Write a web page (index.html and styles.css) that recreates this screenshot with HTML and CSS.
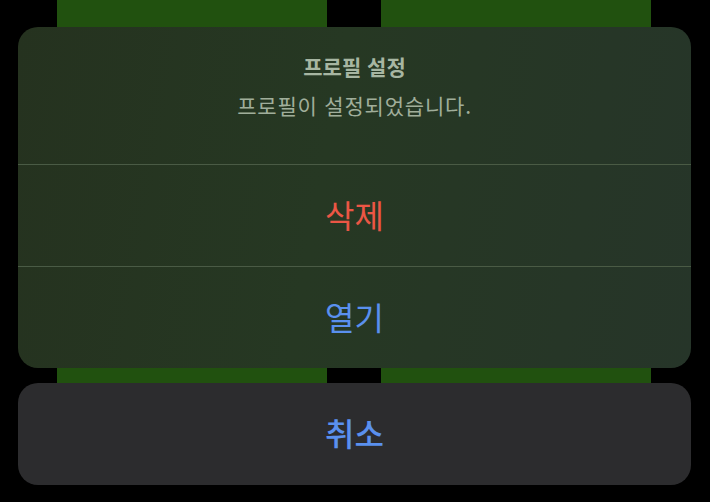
FILE: index.html
```html
<!DOCTYPE html>
<html lang="ko">
<head>
<meta charset="utf-8">
<link rel="stylesheet" href="styles.css">
</head>
<body>
<div class="backdrop">
  <div class="tile"></div>
  <div class="tile"></div>
</div>
<div class="sheet">
  <div class="group">
    <div class="header">
      <div class="title">프로필 설정</div>
      <div class="message">프로필이 설정되었습니다.</div>
    </div>
    <div class="action destructive">삭제</div>
    <div class="action">열기</div>
  </div>
  <div class="cancel">취소</div>
</div>
</body>
</html>
```
FILE: styles.css
```css
html, body {
  margin: 0;
  background: #000;
  width: 710px;
  height: 502px;
  overflow: hidden;
  font-family: "Noto Sans CJK KR", "Noto Sans", sans-serif;
}
body { position: relative; }
.backdrop {
  display: flex;
  gap: 54px;
  padding-left: 57px;
}
.tile {
  width: 270px;
  height: 420px;
  background: #21510f;
}
.sheet {
  position: absolute;
  top: 27px;
  left: 18px;
  width: 673px;
  display: flex;
  flex-direction: column;
  gap: 15px;
}
.group {
  border-radius: 20px;
  overflow: hidden;
  background: linear-gradient(100deg, #25321f 0%, #263823 45%, #263529 100%);
}
.header {
  height: 137px;
  box-sizing: border-box;
  padding-top: 24px;
  display: flex;
  flex-direction: column;
  align-items: center;
  gap: 9px;
  text-align: center;
}
.title {
  font-size: 21px;
  font-weight: 700;
  line-height: 30px;
  color: #a7b6a2;
}
.message {
  font-size: 21px;
  letter-spacing: 0.8px;
  line-height: 30px;
  color: #a0ae9b;
}
.action {
  height: 102px;
  box-sizing: border-box;
  border-top: 1px solid #4a5b45;
  display: flex;
  align-items: center;
  justify-content: center;
  padding-bottom: 4px;
  font-size: 32px;
  line-height: 1;
  color: #5a90ee;
}
.action.destructive { color: #eb5645; }
.cancel {
  height: 102px;
  box-sizing: border-box;
  padding-bottom: 5px;
  border-radius: 20px;
  background: #2c2c2e;
  display: flex;
  align-items: center;
  justify-content: center;
  font-size: 32px;
  line-height: 1;
  font-weight: 500;
  color: #5a90ee;
}
```
